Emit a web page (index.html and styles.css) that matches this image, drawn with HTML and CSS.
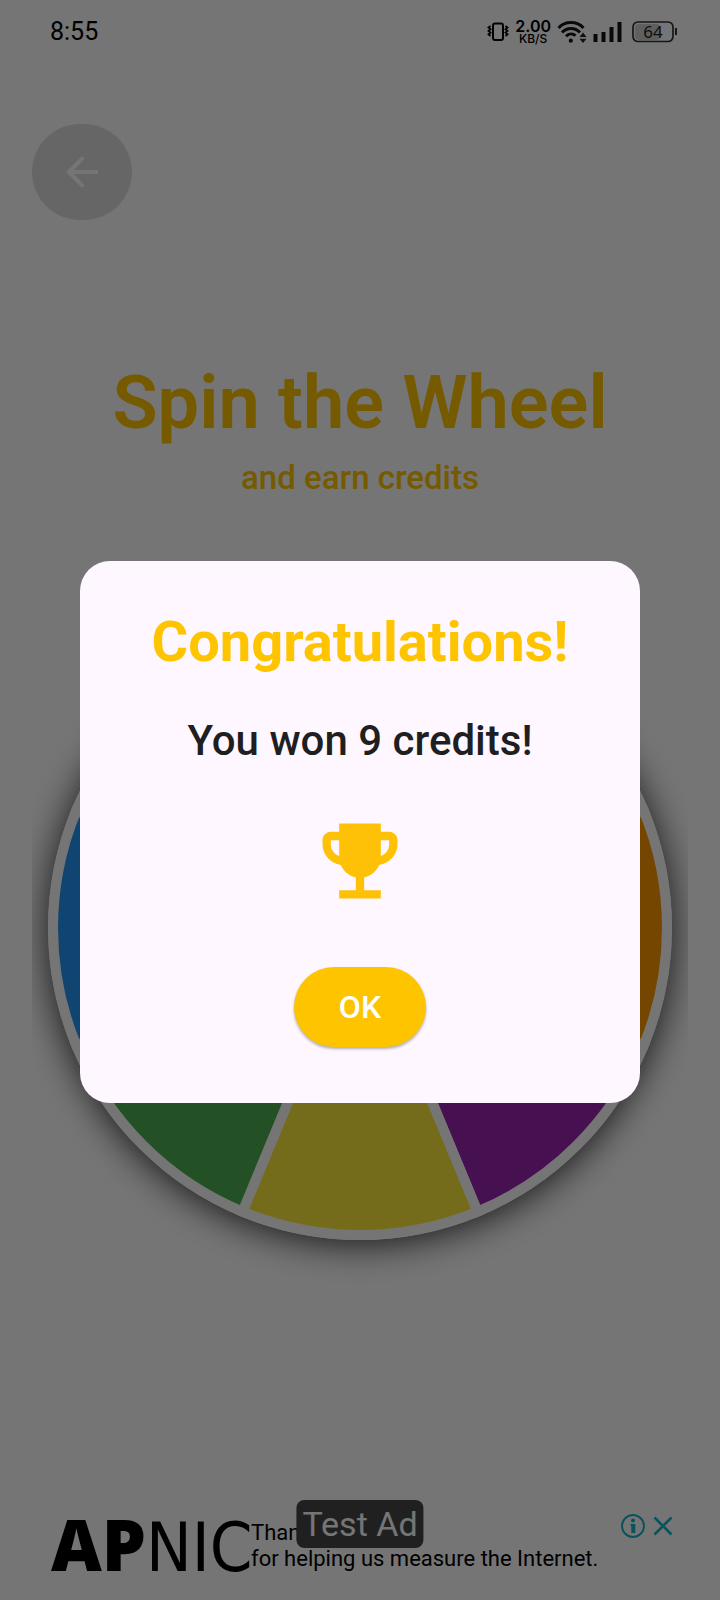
FILE: index.html
```html
<!DOCTYPE html>
<html lang="en">
<head>
<meta charset="utf-8">
<meta name="viewport" content="width=device-width, initial-scale=1">
<title>Spin the Wheel</title>
<link rel="stylesheet" href="styles.css">
</head>
<body>
<div class="screen">
  <header class="status">
    <span class="clock">8:55</span>
    <div class="status-icons">
      <svg class="vibrate" viewBox="0 0 22 20" width="22" height="20" aria-hidden="true">
        <rect x="6" y="1.500" width="10" height="16.500" rx="2" fill="none" stroke="#000" stroke-width="2"/>
        <path d="M3.500 4L1.500 5.500l2 1.700-2 1.700 2 1.700-2 1.700 2 1.700M18.500 4l2 1.500-2 1.700 2 1.700-2 1.700 2 1.700-2 1.700" fill="none" stroke="#000" stroke-width="1.800"/>
      </svg>
      <span class="speed"><b>2.00</b><span>KB/S</span></span>
      <svg class="wifi" viewBox="0 0 30 24" width="30" height="24" aria-hidden="true">
        <path d="M1.500 8C8 .8 20 .8 26.500 8M5 12.500c5-5.300 13-5.300 18 0M9 16.300c3-3 7-3 9.500-.5" fill="none" stroke="#151515" stroke-width="3"/>
        <circle cx="13.800" cy="20.700" r="2.100" fill="#151515"/>
        <path d="M22.500 17l3.500-4.500 3.500 4.500zM22.500 18.700l3.500 4.300 3.500-4.300z" fill="#222"/>
      </svg>
      <svg class="signal" viewBox="0 0 30 22" width="30" height="22" aria-hidden="true">
        <path d="M.5 13h4v8h-4zM8.500 11h4v10h-4zM16.500 6h4v15h-4zM24.500 1h4v20h-4z" fill="#151515"/>
      </svg>
      <svg class="battery" viewBox="0 0 46 22" width="46" height="22" role="img" aria-label="Battery 64%">
        <rect x="3" y="3" width="25" height="16" rx="4" fill="#d0d0d0"/>
        <rect x="1" y="1" width="40" height="19.500" rx="5" fill="none" stroke="#333" stroke-width="1.700"/>
        <path d="M44 7v7" stroke="#333" stroke-width="2"/>
        <text x="21" y="17" text-anchor="middle" class="battery-text">64</text>
      </svg>
    </div>
  </header>

  <main class="content">
    <button class="back" type="button" aria-label="Back">
      <svg viewBox="0 0 24 24" width="48" height="48" aria-hidden="true"><path d="M20 11H7.830l5.590-5.590L12 4l-8 8 8 8 1.410-1.410L7.830 13H20z" fill="#fff"/></svg>
    </button>
    <h1 class="title">Spin the Wheel</h1>
    <p class="subtitle">and earn credits</p>
    <div class="wheel-area">
      <div class="wheel">
        <svg viewBox="-312 -312 624 624" aria-hidden="true">
          <g stroke="#fff" stroke-width="10">
            <path d="M0 0L117.500 -283.600A307 307 0 0 1 283.600 -117.500Z" fill="#f44336"/>
            <path d="M0 0L283.600 -117.500A307 307 0 0 1 283.600 117.500Z" fill="#ff9800"/>
            <path d="M0 0L283.600 117.500A307 307 0 0 1 117.500 283.600Z" fill="#9c27b0"/>
            <path d="M0 0L117.500 283.600A307 307 0 0 1 -117.500 283.600Z" fill="#ffeb3b"/>
            <path d="M0 0L-117.500 283.600A307 307 0 0 1 -283.600 117.500Z" fill="#4caf50"/>
            <path d="M0 0L-283.600 117.500A307 307 0 0 1 -283.600 -117.500Z" fill="#2196f3"/>
            <path d="M0 0L-283.600 -117.500A307 307 0 0 1 -117.500 -283.600Z" fill="#e91e63"/>
            <path d="M0 0L-117.500 -283.600A307 307 0 0 1 117.500 -283.600Z" fill="#009688"/>
          </g>
        </svg>
      </div>
    </div>
  </main>

  <aside class="ad">
    <span class="logo"><b>AP</b><span>NIC</span></span>
    <p class="ad-text">Thank you<br>for helping us measure the Internet.</p>
    <span class="ad-badge">Test Ad</span>
    <div class="ad-controls">
      <button type="button" aria-label="Ad information"><svg viewBox="0 0 24 24" width="24" height="24" aria-hidden="true"><circle cx="12" cy="12" r="11" fill="none" stroke="#14b4cc" stroke-width="1.900"/><circle cx="12" cy="6.500" r="2" fill="#14b4cc"/><path d="M9.500 10h4.800v9h-4v-7h-.8z" fill="#14b4cc"/></svg></button>
      <button type="button" aria-label="Close ad"><svg viewBox="0 0 24 24" width="24" height="24" aria-hidden="true"><path d="M3.500 3.500l17 17M20.500 3.500l-17 17" stroke="#14b4cc" stroke-width="2.600"/></svg></button>
    </div>
  </aside>
</div>

<div class="scrim">
  <section class="dialog" role="dialog" aria-modal="true" aria-labelledby="dialog-title">
    <h2 class="dialog-title" id="dialog-title">Congratulations!</h2>
    <p class="dialog-text">You won 9 credits!</p>
    <svg class="trophy" viewBox="0 0 24 24" width="100" height="100" aria-hidden="true"><path d="M19 5h-2V3H7v2H5c-1.100 0-2 .9-2 2v1c0 2.550 1.920 4.630 4.390 4.940.63 1.500 1.980 2.630 3.610 2.960V19H7v2h10v-2h-4v-3.100c1.630-.33 2.980-1.460 3.610-2.960C19.080 12.630 21 10.550 21 8V7c0-1.100-.9-2-2-2zM5 8V7h2v3.820C5.840 10.400 5 9.300 5 8zm14 0c0 1.300-.84 2.400-2 2.820V7h2v1z" fill="#ffc107"/></svg>
    <button class="ok" type="button">OK</button>
  </section>
</div>
</body>
</html>
```
FILE: styles.css
```css
* {
  box-sizing: border-box;
}

body {
  margin: 0;
  background: #fff;
  font-family: Roboto, "Liberation Sans", sans-serif;
}

h1, h2, p {
  margin: 0;
}

button {
  padding: 0;
  border: 0;
  font-family: inherit;
  cursor: pointer;
}

svg {
  display: block;
}

.screen {
  display: flex;
  flex-direction: column;
  min-height: 100vh;
}

.status {
  display: flex;
  justify-content: space-between;
  align-items: center;
  height: 64px;
  padding: 0 42px 0 50px;
  color: #000;
}

.clock {
  font-size: 25px;
  line-height: 28px;
}

.status-icons {
  display: flex;
  align-items: center;
  gap: 6px;
}

.speed {
  display: flex;
  flex-direction: column;
  align-items: center;
  font-family: Inter, sans-serif;
  font-size: 12px;
  font-weight: 500;
  line-height: 12px;
}

.speed b {
  font-size: 16px;
  font-weight: 600;
  line-height: 14px;
}

.battery-text {
  font-family: "Noto Sans", sans-serif;
  font-size: 17px;
  fill: #222;
}

.battery {
  margin-left: 3px;
}

.content {
  flex: 1;
  display: flex;
  flex-direction: column;
  padding: 60px 32px 0;
}

.back {
  display: flex;
  align-items: center;
  justify-content: center;
  width: 100px;
  height: 96px;
  border-radius: 48px;
  background: #dedede;
}

.title {
  margin-top: 141px;
  color: #ffc400;
  font-size: 74px;
  font-weight: 600;
  line-height: 84px;
  text-align: center;
}

.subtitle {
  margin-top: 14px;
  color: #ffc400;
  font-size: 33px;
  font-weight: 500;
  line-height: 38px;
  text-align: center;
}

.wheel-area {
  margin-top: 87px;
  padding: 32px 16px 48px;
  overflow: hidden;
}

.wheel {
  border-radius: 50%;
  background: #fff;
  box-shadow: 0 4px 36px rgba(0, 0, 0, 0.8);
}

.ad {
  position: relative;
  display: flex;
  align-items: center;
  height: 100px;
  padding: 0 44px 8px 51px;
  color: #000;
}

.logo {
  flex: none;
  display: flex;
  align-items: baseline;
  width: 200px;
  font-family: "DejaVu Sans Condensed", "Open Sans", sans-serif;
  font-size: 68px;
  line-height: 76px;
}

.logo b {
  font-family: "Open Sans", sans-serif;
  font-size: 70px;
  font-weight: 800;
}

.ad-text {
  font-size: 22px;
  line-height: 26px;
  white-space: nowrap;
}

.ad-badge {
  position: absolute;
  top: 0;
  left: 50%;
  padding: 4px 6px;
  border-radius: 8px;
  background: #464646;
  color: #fff;
  font-size: 34px;
  line-height: 40px;
  white-space: nowrap;
  transform: translateX(-50%);
}

.ad-controls {
  position: absolute;
  top: 14px;
  right: 45px;
  display: flex;
  gap: 6px;
}

.ad-controls button {
  background: none;
}

.scrim {
  position: fixed;
  inset: 0;
  display: flex;
  align-items: center;
  justify-content: center;
  padding: 64px 80px 0;
  background: rgba(0, 0, 0, 0.54);
}

.dialog {
  display: flex;
  flex-direction: column;
  align-items: center;
  width: 100%;
  padding: 48px 32px 56px;
  border-radius: 30px;
  background: #fef7ff;
  text-align: center;
}

.dialog-title {
  color: #ffc400;
  font-size: 56px;
  font-weight: 700;
  line-height: 66px;
}

.dialog-text {
  margin-top: 42px;
  color: #1f1f21;
  font-size: 42px;
  font-weight: 500;
  line-height: 48px;
}

.trophy {
  margin-top: 46px;
}

.ok {
  min-width: 132px;
  height: 80px;
  margin-top: 56px;
  padding: 0 32px;
  border-radius: 40px;
  background: #ffc400;
  box-shadow: 0 2px 3px rgba(0, 0, 0, 0.3);
  color: #fff;
  font-size: 32px;
  font-weight: 500;
  line-height: 38px;
}
```
